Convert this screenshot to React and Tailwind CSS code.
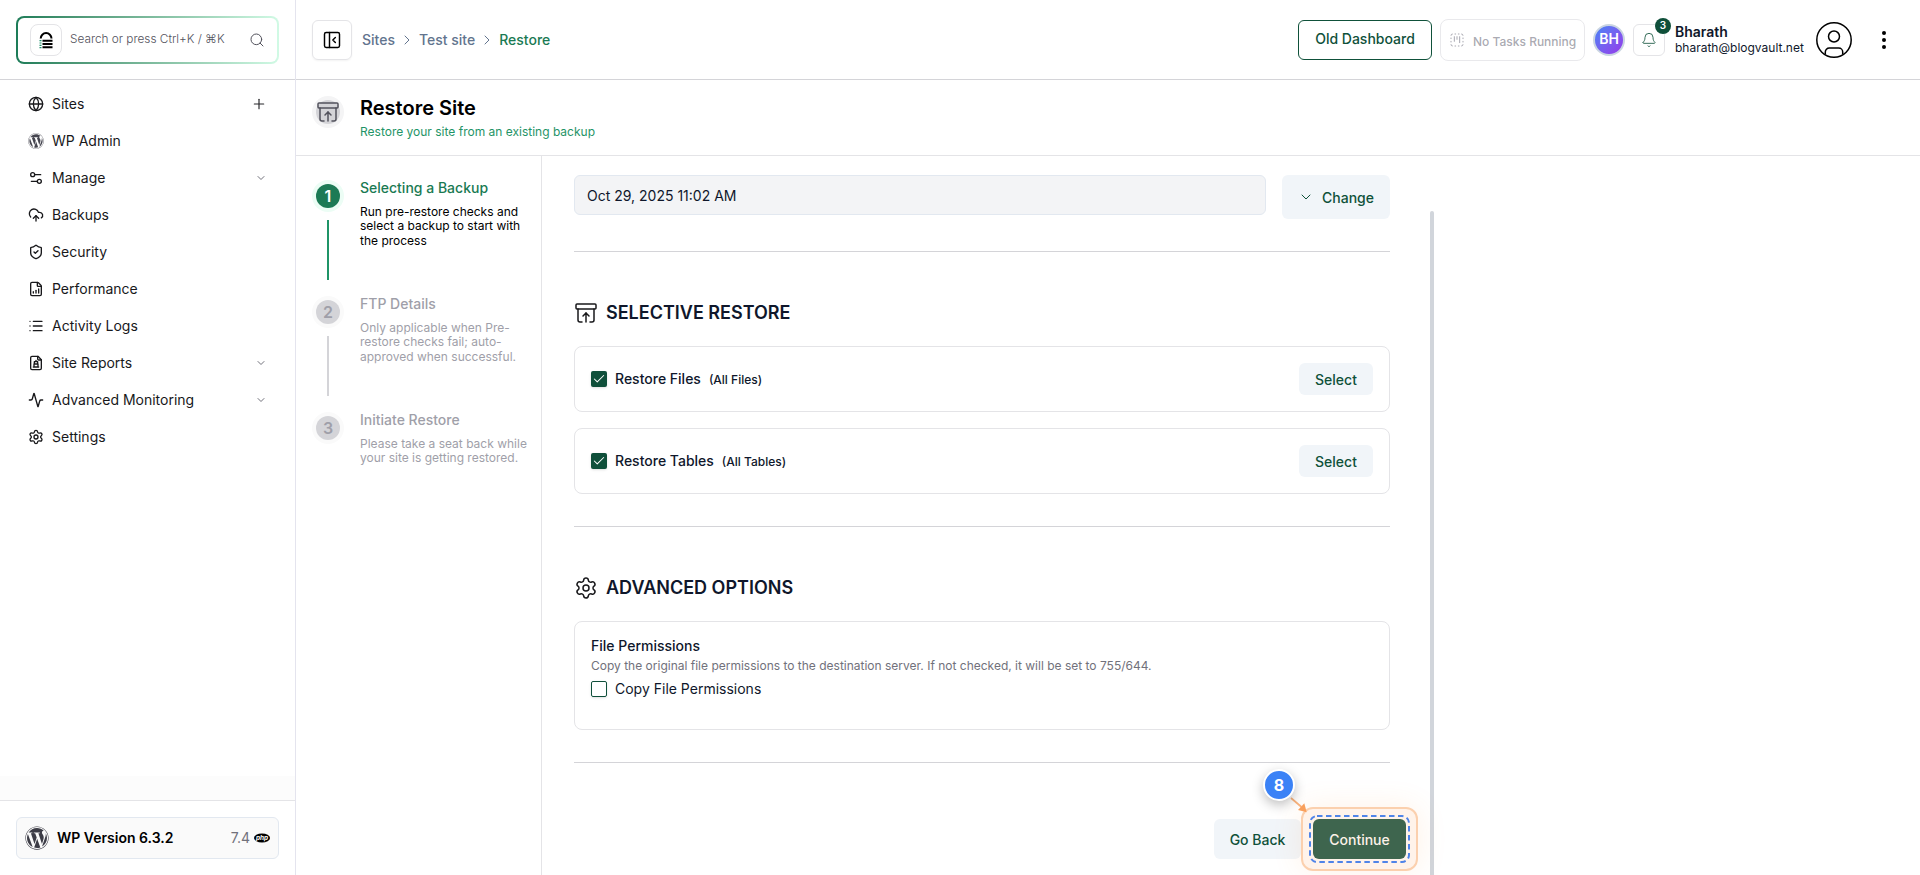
import React from "react";
import {
  Activity,
  ArchiveRestore,
  Bell,
  Check,
  ChevronDown,
  ChevronRight,
  CloudUpload,
  FileChartColumnIncreasing,
  Globe,
  List,
  PanelLeftClose,
  Plus,
  Search,
  Settings,
  Settings2,
  ShieldCheck,
  SquareDashedKanban,
} from "lucide-react";
import { FaWordpress } from "react-icons/fa";

function ReportIcon({ size = 16, strokeWidth = 2, className }) {
  return (
    <svg width={size} height={size} viewBox="0 0 24 24" className={className} fill="none" stroke="currentColor" strokeWidth={strokeWidth} strokeLinecap="round" strokeLinejoin="round">
      <path d="M15 2H6a2 2 0 0 0-2 2v16a2 2 0 0 0 2 2h12a2 2 0 0 0 2-2V7z" />
      <path d="M14.5 2v4a1.5 1.5 0 0 0 1.5 1.5H20" />
      <path d="M9 18v-4.5M15 18v-4.5M8 18h8M9 13.5h6M9.5 10h5v3.5h-5zM12 10V8" />
    </svg>
  );
}

function LockLogo() {
  return (
    <svg width="16" height="18" viewBox="0 0 16 18" fill="none">
      <path d="M2.7 7.5a5.4 5.4 0 0 1 10.8 0" stroke="#000" strokeWidth="2" />
      <path d="M4.5 9.7H14.5M4.5 13H14.5M4.5 16.3H14.5" stroke="#000" strokeWidth="2" />
      <path d="M1.5 9.7h2M1.5 12h2M1.5 14.3h2M1.5 16.6h2" stroke="#1f8f6b" strokeWidth="1.2" />
    </svg>
  );
}

function PhpLogo() {
  return (
    <svg width="16" height="10" viewBox="0 0 16 10" className="ml-1">
      <ellipse cx="8" cy="5" rx="8" ry="4.5" fill="#000" />
      <text x="8" y="6.9" textAnchor="middle" fontSize="6.5" fontWeight="700" fontStyle="italic" fill="#fff">
        php
      </text>
    </svg>
  );
}

function UserIcon() {
  return (
    <svg width="36" height="36" viewBox="0 0 36 36" fill="none" stroke="#000" strokeWidth="1.5">
      <circle cx="18" cy="18" r="17.2" />
      <circle cx="18" cy="14.5" r="5.5" />
      <path d="M9.3 32.5V30a4 4 0 0 1 4-4h9.4a4 4 0 0 1 4 4v2.5" />
    </svg>
  );
}

const navItems = [
  { label: "Sites", icon: Globe, end: "plus" },
  { label: "WP Admin", icon: FaWordpress, color: "text-[#45454f]" },
  { label: "Manage", icon: Settings2, end: "chevron" },
  { label: "Backups", icon: CloudUpload },
  { label: "Security", icon: ShieldCheck },
  { label: "Performance", icon: FileChartColumnIncreasing },
  { label: "Activity Logs", icon: List },
  { label: "Site Reports", icon: ReportIcon, end: "chevron" },
  { label: "Advanced Monitoring", icon: Activity, end: "chevron" },
  { label: "Settings", icon: Settings },
];

const steps = [
  {
    title: "Selecting a Backup",
    text: "Run pre-restore checks and select a backup to start with the process",
    active: true,
  },
  {
    title: "FTP Details",
    text: "Only applicable when Pre-restore checks fail; auto-approved when successful.",
  },
  {
    title: "Initiate Restore",
    text: "Please take a seat back while your site is getting restored.",
  },
];

function Sidebar() {
  return (
    <aside className="w-[296px] h-full shrink-0 flex flex-col border-r border-[#e4e4ee]">
      <div className="h-20 shrink-0 border-b border-zinc-300 px-4 pt-4">
        <div className="w-[263px] h-12 rounded-lg p-0.5 bg-linear-to-r from-[#1c7c58] to-[#d1fae5]">
          <div className="h-full rounded-md bg-white flex items-center px-3">
            <div className="w-8 h-8 rounded-lg border border-zinc-200 flex items-center justify-center">
              <LockLogo />
            </div>
            <span className="ml-2 text-[11.8px] font-light text-zinc-600 whitespace-nowrap">
              Search or press Ctrl+K / ⌘K
            </span>
            <Search size={16} strokeWidth={1.5} className="ml-auto text-zinc-600" />
          </div>
        </div>
      </div>

      <nav className="flex-1 pt-[5.5px]">
        {navItems.map(({ label, icon: Icon, color = "text-zinc-900", end }) => (
          <div key={label} className="h-[37px] flex items-center pl-7 pr-[30px]">
            <Icon size={16} className={color} />
            <span className="ml-2 text-sm text-zinc-900">{label}</span>
            {end === "plus" && <Plus size={16} strokeWidth={1.75} className="ml-auto -mr-0.5 text-zinc-800" />}
            {end === "chevron" && <ChevronDown size={12} className="ml-auto -mr-0.5 text-zinc-500" />}
          </div>
        ))}
      </nav>

      <div className="h-6 bg-[#fcfcfc]" />
      <div className="h-[75px] shrink-0 border-t border-zinc-200 px-4 pt-4">
        <div className="w-[263px] h-[42px] rounded-md border border-slate-200 bg-[#fafafa] flex items-center px-2">
          <FaWordpress size={24} className="text-[#3c3c46]" />
          <span className="ml-2 text-sm font-semibold text-black">WP Version 6.3.2</span>
          <span className="ml-auto text-sm text-zinc-500">7.4</span>
          <PhpLogo />
        </div>
      </div>
    </aside>
  );
}

function Header() {
  return (
    <header className="h-20 shrink-0 border-b border-zinc-300 flex items-center pl-4">
      <button className="w-10 h-10 rounded-md border border-zinc-200 shadow-xs flex items-center justify-center">
        <PanelLeftClose size={20} strokeWidth={1.75} />
      </button>
      <div className="ml-2.5 flex items-center text-sm font-medium text-slate-500">
        <span>Sites</span>
        <ChevronRight size={16} strokeWidth={1.5} className="mx-1" />
        <span>Test site</span>
        <ChevronRight size={16} strokeWidth={1.5} className="mx-1" />
        <span className="text-[#1a7a53]">Restore</span>
      </div>

      <div className="ml-auto flex items-center">
        <button className="w-[134px] h-10 rounded-md border border-[#0f513a] text-sm font-medium text-[#0f513a] pb-0.5">
          Old Dashboard
        </button>
        <div className="ml-2 w-[145px] h-[42px] rounded-lg border border-zinc-200/80 flex items-center pl-2 text-zinc-400/90">
          <SquareDashedKanban size={16} strokeWidth={1.5} />
          <span className="ml-2 mt-1 text-xs font-medium whitespace-nowrap">No Tasks Running</span>
        </div>
        <div className="ml-2 w-8 h-8 rounded-full border-2 border-slate-300 bg-linear-to-br from-[#3b82f6] to-[#9333ea] pb-0.5 flex items-center justify-center text-sm font-semibold text-white">
          BH
        </div>
        <div className="relative ml-2 w-8 h-8 rounded-md border border-zinc-200 flex items-center justify-center">
          <Bell size={16} strokeWidth={1.25} className="text-[#0f513a]" />
          <span className="absolute -top-[7px] -right-[7px] w-4 h-4 rounded-full bg-[#0f4f3a] text-white text-[10px] font-semibold flex items-center justify-center">
            3
          </span>
        </div>
        <div className="ml-2.5 w-[130px] text-slate-900">
          <p className="text-sm leading-4 font-semibold">Bharath</p>
          <p className="text-xs leading-4">bharath@blogvault.net</p>
        </div>
        <div className="ml-[11px]">
          <UserIcon />
        </div>
        <div className="ml-[30px] mr-[34px] flex flex-col gap-[3px]">
          {[0, 1, 2].map((i) => (
            <span key={i} className="w-1 h-1 rounded-full bg-black" />
          ))}
        </div>
      </div>
    </header>
  );
}

function Stepper() {
  return (
    <div className="w-[246px] shrink-0 border-r border-zinc-200 pl-4 pt-6">
      {steps.map((step, i) => (
        <div key={step.title} className="h-[116px] flex">
          <div className="w-8 flex flex-col items-center">
            <div className={`w-8 h-8 rounded-full p-1 ${step.active ? "bg-[#ecfdf5]" : "bg-zinc-50"}`}>
              <div
                className={`w-6 h-6 rounded-full flex items-center justify-center text-base font-semibold ${
                  step.active ? "bg-[#1c7a55] text-white" : "bg-zinc-300 text-zinc-400"
                }`}
              >
                {i + 1}
              </div>
            </div>
            {i < steps.length - 1 && (
              <div className={`mt-2 w-0.5 h-[60px] ${step.active ? "bg-[#1f9467]" : "bg-zinc-300"}`} />
            )}
          </div>
          <div className="ml-4 -mt-0.5 w-[172px]">
            <p className={`text-sm font-medium ${step.active ? "text-[#1a7a53]" : "text-zinc-400"}`}>{step.title}</p>
            <p className={`mt-[7px] text-xs leading-[14.4px] ${step.active ? "text-black" : "text-zinc-400"}`}>
              {step.text}
            </p>
          </div>
        </div>
      ))}
    </div>
  );
}

function SectionTitle({ icon: Icon, children }) {
  return (
    <div className="h-7 flex items-center gap-2 text-slate-900">
      <Icon size={24} strokeWidth={1.5} className="text-zinc-900" />
      <h2 className="text-lg font-semibold">{children}</h2>
    </div>
  );
}

function RestoreRow({ label, note }) {
  return (
    <div className="h-[66px] rounded-lg border border-zinc-200 px-4 flex items-center text-slate-900">
      <span className="w-4 h-4 rounded-[2px] bg-[#0f4f3a] shadow-sm flex items-center justify-center">
        <Check size={14} strokeWidth={1.75} className="text-white" />
      </span>
      <span className="ml-2 text-sm font-medium">{label}</span>
      <span className="ml-2 mt-0.5 text-xs font-medium">{note}</span>
      <button className="ml-auto w-[74px] h-8 rounded-md bg-slate-100 text-sm font-medium text-[#0f513a] pt-0.5">
        Select
      </button>
    </div>
  );
}

function Callout() {
  return (
    <>
      <div className="absolute -inset-3 rounded-xl border-2 border-[#fbd0ae] bg-[#fff3ea] shadow-[0_0_30px_rgba(251,146,60,0.12)]" />
      <svg className="absolute -top-1 -left-1" width="101" height="48" fill="none">
        <rect x="1" y="1" width="99" height="46" rx="7" stroke="#4f84e8" strokeWidth="2" strokeDasharray="5.5 3.5" />
      </svg>
      <svg className="absolute -top-6 -left-6" width="20" height="20" fill="none">
        <path d="M2 3L12.5 12" stroke="#f9b27c" strokeWidth="1.75" />
        <path d="M17.7 17.3L9 15L15.3 8.3Z" fill="#f9a05c" />
      </svg>
      <span className="absolute -top-[50px] -left-[50px] w-8 h-8 rounded-full border-2 border-white bg-[#3b82f6] shadow-[0_4px_12px_rgba(0,0,0,0.25)] flex items-center justify-center text-base font-bold text-white">
        8
      </span>
    </>
  );
}

function RestoreForm() {
  return (
    <div className="w-[832px] ml-8 pt-[19px]">
      <div className="w-[816px]">
        <div className="h-11 flex items-start gap-4">
          <div className="flex-1 h-10 rounded-md border border-slate-200 bg-gray-100 px-3 pt-0.5 flex items-center text-sm text-slate-900">
            Oct 29, 2025 11:02 AM
          </div>
          <button className="w-[108px] h-11 rounded-md bg-slate-100 flex items-center pl-4 text-sm font-medium text-[#0f513a]">
            <ChevronDown size={16} strokeWidth={1.5} />
            <span className="ml-2 mt-0.5">Change</span>
          </button>
        </div>

        <div className="mt-8 border-t border-zinc-300" />

        <div className="mt-[47px]">
          <SectionTitle icon={ArchiveRestore}>SELECTIVE RESTORE</SectionTitle>
          <div className="mt-[19px] flex flex-col gap-4">
            <RestoreRow label="Restore Files" note="(All Files)" />
            <RestoreRow label="Restore Tables" note="(All Tables)" />
          </div>
        </div>

        <div className="mt-8 border-t border-zinc-300" />

        <div className="mt-[47px]">
          <SectionTitle icon={Settings}>ADVANCED OPTIONS</SectionTitle>
          <div className="mt-[19px] h-[109px] rounded-lg border border-zinc-200 px-4 pt-3.5 text-slate-900">
            <p className="text-sm font-medium">File Permissions</p>
            <p className="mt-0.5 text-xs text-zinc-500">
              Copy the original file permissions to the destination server. If not checked, it will be set to 755/644.
            </p>
            <div className="mt-[5px] flex items-center">
              <span className="w-4 h-4 rounded-[2px] border border-[#0f4f3a] shadow-sm" />
              <span className="ml-2 text-sm">Copy File Permissions</span>
            </div>
          </div>
        </div>

        <div className="mt-8 border-t border-zinc-300" />
      </div>

      <div className="mt-14 flex justify-end gap-3">
        <button className="w-[87px] h-10 rounded-md bg-slate-100 text-sm font-medium text-[#0f513a] pt-0.5">
          Go Back
        </button>
        <div className="relative w-[93px] h-10">
          <Callout />
          <button className="relative w-full h-full rounded-md bg-[#3e654e] text-sm font-medium text-[#fdf1e8] pt-0.5">
            Continue
          </button>
        </div>
      </div>
    </div>
  );
}

export default function App() {
  return (
    <div className="w-[1920px] h-[875px] flex overflow-hidden bg-white font-['Inter','Noto_Sans',sans-serif]">
      <Sidebar />
      <div className="flex-1 flex flex-col min-w-0">
        <Header />
        <div className="h-[76px] shrink-0 border-b border-zinc-200 flex pl-4 pt-4">
          <div className="w-8 h-8 rounded-full bg-zinc-100 p-1">
            <div className="w-6 h-6 rounded-full bg-zinc-300 flex items-center justify-center">
              <ArchiveRestore size={24} strokeWidth={1.5} className="shrink-0 text-zinc-600" />
            </div>
          </div>
          <div className="ml-4 -mt-0.5">
            <h1 className="text-xl leading-7 font-semibold text-black">Restore Site</h1>
            <p className="mt-0.5 text-xs text-[#1f9467]">Restore your site from an existing backup</p>
          </div>
        </div>
        <div className="flex-1 flex min-h-0">
          <Stepper />
          <RestoreForm />
          <div className="ml-6 mt-[55px] w-1 rounded-t-full bg-[#d1d5db]" />
        </div>
      </div>
    </div>
  );
}
